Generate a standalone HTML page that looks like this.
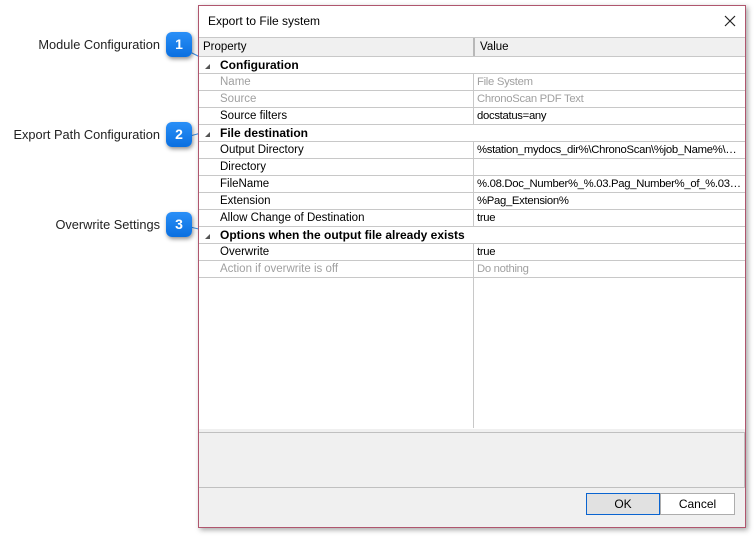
<!DOCTYPE html>
<html><head><meta charset="utf-8"><style>
body{margin:0;width:756px;height:537px;background:#fff;font-family:"Liberation Sans",sans-serif;position:relative;overflow:hidden}
.a{position:absolute}
.lbl{position:absolute;font-size:12.8px;color:#222;text-align:right;width:200px;left:-40px;white-space:nowrap}
.co{position:absolute;width:26px;height:25px;border-radius:6px;background:linear-gradient(#2a8ff7,#0a6fe0);color:#fff;font-size:14px;font-weight:bold;text-align:center;line-height:25px;box-shadow:1px 2px 4px rgba(0,0,0,.45)}
.dlg{position:absolute;left:198px;top:5px;width:546px;height:521px;border:1px solid #b0566e;background:#f0f0f0;box-shadow:2px 2px 5px rgba(0,0,0,.35)}
.row{position:absolute;left:0;width:546px;height:16px;border-bottom:1px solid #c8c8c8;background:#fff;font-size:11.5px;line-height:17px}
.p{position:absolute;left:21px}
.v{position:absolute;left:274px;border-left:1px solid #c8c8c8;padding-left:3px;height:16px;width:264px;white-space:nowrap;overflow:hidden;text-overflow:ellipsis;font-size:11.3px;letter-spacing:-0.3px}
.g{font-weight:bold;font-size:12px}
.dis{color:#a0a0a0}
.tri{position:absolute;left:6px;top:7px;width:0;height:0;border-left:5px solid transparent;border-bottom:5px solid #555}
</style></head><body>
<div class="lbl" style="top:37px">Module Configuration</div>
<div class="lbl" style="top:127px">Export Path Configuration</div>
<div class="lbl" style="top:217px">Overwrite Settings</div>
<svg class="a" style="left:0;top:0" width="756" height="537"><g stroke="#3a8ee6" stroke-width="1"><line x1="190" y1="52" x2="210" y2="62"/><line x1="190" y1="136" x2="212" y2="130"/><line x1="190" y1="227" x2="212" y2="232"/></g></svg>
<div class="dlg">
<div class="a" style="left:0;top:0;width:546px;height:31px;background:#fff"></div>
<div class="a" style="left:9px;top:8px;font-size:12px">Export to File system</div>
<svg class="a" style="left:525px;top:9px" width="12" height="12"><path d="M1 1L11 11M11 1L1 11" stroke="#222" stroke-width="1.2"/></svg>
<div class="a" style="left:0;top:31px;width:546px;height:392px;background:#fff"></div>
<div class="a" style="left:274px;top:50px;width:1px;height:372px;background:#c8c8c8"></div>
<div class="a" style="left:0;top:31px;width:546px;height:18px;background:#f0f0f0;border-top:1px solid #c8c8c8;border-bottom:1px solid #c8c8c8;font-size:11.5px;line-height:19px"><span style="position:absolute;left:4px">Property</span><span style="position:absolute;left:274px;border-left:2px solid #b8b8b8;padding-left:5px;height:18px">Value</span></div>
<div style="position:absolute;top:51px;left:0">
<div class="row g" style="top:0"><div class="tri"></div><span class="p">Configuration</span></div>
<div class="row dis" style="top:17px"><span class="p">Name</span><span class="v">File System</span></div>
<div class="row dis" style="top:34px"><span class="p">Source</span><span class="v">ChronoScan PDF Text</span></div>
<div class="row" style="top:51px"><span class="p">Source filters</span><span class="v">docstatus=any</span></div>
<div class="row g" style="top:68px"><div class="tri"></div><span class="p">File destination</span></div>
<div class="row" style="top:85px"><span class="p">Output Directory</span><span class="v">%station_mydocs_dir%\ChronoScan\%job_Name%\%...</span></div>
<div class="row" style="top:102px"><span class="p">Directory</span><span class="v"></span></div>
<div class="row" style="top:119px"><span class="p">FileName</span><span class="v">%.08.Doc_Number%_%.03.Pag_Number%_of_%.03.D...</span></div>
<div class="row" style="top:136px"><span class="p">Extension</span><span class="v">%Pag_Extension%</span></div>
<div class="row" style="top:153px"><span class="p">Allow Change of Destination</span><span class="v">true</span></div>
<div class="row g" style="top:170px"><div class="tri"></div><span class="p">Options when the output file already exists</span></div>
<div class="row" style="top:187px"><span class="p">Overwrite</span><span class="v">true</span></div>
<div class="row dis" style="top:204px"><span class="p">Action if overwrite is off</span><span class="v">Do nothing</span></div>
</div>
<div class="a" style="left:0;top:426px;width:545px;height:54px;border-top:1px solid #c0c0c0;border-bottom:1px solid #c0c0c0;border-right:1px solid #c0c0c0;background:#f0f0f0"></div>
<div class="a" style="left:387px;top:487px;width:72px;height:20px;border:1px solid #0a64d0;background:#e1e1e1;font-size:12px;text-align:center;line-height:20px">OK</div>
<div class="a" style="left:461px;top:487px;width:73px;height:20px;border:1px solid #adadad;background:#fff;font-size:12px;text-align:center;line-height:20px">Cancel</div>
</div>
<div class="co" style="left:166px;top:32px">1</div>
<div class="co" style="left:166px;top:122px">2</div>
<div class="co" style="left:166px;top:212px">3</div>
</body></html>
